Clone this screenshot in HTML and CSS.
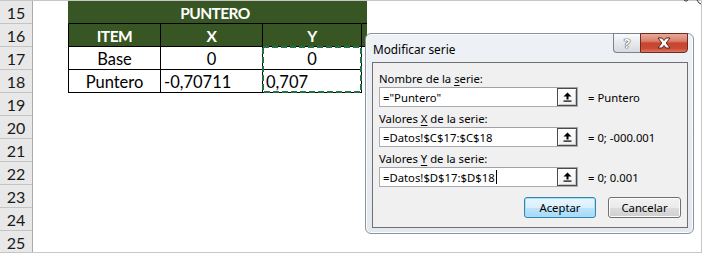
FILE: index.html
```html
<!DOCTYPE html>
<html lang="es">
<head>
<meta charset="utf-8">
<title>Modificar serie</title>
<link rel="stylesheet" href="styles.css">
</head>
<body>
<div class="sheet">
  <div class="rowheads">
    <div class="rh">15</div>
    <div class="rh">16</div>
    <div class="rh">17</div>
    <div class="rh">18</div>
    <div class="rh">19</div>
    <div class="rh">20</div>
    <div class="rh">21</div>
    <div class="rh">22</div>
    <div class="rh">23</div>
    <div class="rh">24</div>
    <div class="rh">25</div>
  </div>
  <div class="cells">
    <div class="grid">
      <div class="c title">PUNTERO</div>
      <div class="c fill"></div>
      <div class="c hd first">ITEM</div>
      <div class="c hd">X</div>
      <div class="c hd">Y</div>
      <div class="c fill"></div>
      <div class="c first">Base</div>
      <div class="c">0</div>
      <div class="c">0</div>
      <div class="c blank"></div>
      <div class="c first">Puntero</div>
      <div class="c left">-0,70711</div>
      <div class="c left">0,707</div>
      <div class="c blank"></div>
    </div>
    <svg class="marquee" width="100" height="47" viewBox="0 0 100 47">
      <rect x="1" y="1" width="98" height="45" fill="none" stroke="#217346" stroke-width="2" stroke-dasharray="6 3"/>
    </svg>
  </div>
</div>

<svg class="marks" width="20" height="6" viewBox="0 0 20 6">
  <path d="M1 0 Q3 2.5 5 0" fill="none" stroke="#333" stroke-width="1"/>
  <path d="M14 0 Q16 4 18 4" fill="none" stroke="#333" stroke-width="1"/>
</svg>

<div class="dialog">
  <div class="titlebar">
    <span class="title-text">Modificar serie</span>
    <div class="caps">
      <div class="cap help">?</div>
      <div class="cap close">
        <svg width="16" height="12" viewBox="0 0 16 12">
          <path d="M2 1 H6 L8 3.5 L10 1 H14 L10.2 6 L14 11 H10 L8 8.5 L6 11 H2 L5.8 6 Z" fill="#fff" stroke="#5b2317" stroke-width="1"/>
        </svg>
      </div>
    </div>
  </div>
  <div class="panel">
    <div class="label">Nombre de la <u>s</u>erie:</div>
    <div class="field">
      <div class="input"><span class="val">="Puntero"</span><span class="pick"><svg width="9" height="10" viewBox="0 0 9 10"><path d="M4.5 0.5 L8.5 4.5 H5.5 V7.5 H3.5 V4.5 H0.5 Z" fill="#000"/><rect x="0.5" y="8.5" width="8" height="1.2" fill="#000"/></svg></span></div>
      <span class="result">= Puntero</span>
    </div>
    <div class="label">Valores <u>X</u> de la serie:</div>
    <div class="field">
      <div class="input"><span class="val">=Datos!$C$17:$C$18</span><span class="pick"><svg width="9" height="10" viewBox="0 0 9 10"><path d="M4.5 0.5 L8.5 4.5 H5.5 V7.5 H3.5 V4.5 H0.5 Z" fill="#000"/><rect x="0.5" y="8.5" width="8" height="1.2" fill="#000"/></svg></span></div>
      <span class="result">= 0; -000.001</span>
    </div>
    <div class="label">Valores <u>Y</u> de la serie:</div>
    <div class="field">
      <div class="input"><span class="val">=Datos!$D$17:$D$18</span><span class="caret"></span><span class="pick"><svg width="9" height="10" viewBox="0 0 9 10"><path d="M4.5 0.5 L8.5 4.5 H5.5 V7.5 H3.5 V4.5 H0.5 Z" fill="#000"/><rect x="0.5" y="8.5" width="8" height="1.2" fill="#000"/></svg></span></div>
      <span class="result">= 0; 0.001</span>
    </div>
    <div class="actions">
      <button class="btn default">Aceptar</button>
      <button class="btn">Cancelar</button>
    </div>
  </div>
</div>
</body>
</html>
```
FILE: styles.css
```css
html, body {
  margin: 0;
  padding: 0;
}
body {
  width: 702px;
  height: 253px;
  overflow: hidden;
  position: relative;
  background: #fff;
}
.sheet {
  display: flex;
  height: 253px;
  box-sizing: border-box;
  border-top: 1px solid #c6c6c6;
  border-bottom: 1px solid #c6c6c6;
  border-right: 1px solid #c6c6c6;
  overflow: hidden;
}
.rowheads {
  width: 33px;
  flex: none;
  box-sizing: border-box;
  background: #e8e8e8;
  border-right: 1px solid #ababab;
}
.rh {
  height: 23px;
  box-sizing: border-box;
  border-bottom: 1px solid #c4c4c4;
  display: flex;
  align-items: center;
  justify-content: center;
  font-family: Lato, "Liberation Sans", sans-serif;
  font-size: 16px;
  color: #1a1a1a;
}
.cells {
  flex: 1;
  position: relative;
  padding-left: 35px;
}
.grid {
  display: grid;
  grid-template-columns: 93px 102px 99px 5px;
  grid-auto-rows: 23px;
}
.c {
  box-sizing: border-box;
  border-right: 1px solid #000;
  border-bottom: 1px solid #000;
  display: flex;
  align-items: center;
  justify-content: center;
  font-family: Lato, "Liberation Sans", sans-serif;
  font-size: 16.5px;
  color: #000;
  padding-top: 1px;
}
.c.first {
  border-left: 1px solid #000;
}
.c.left {
  justify-content: flex-start;
  padding-left: 3px;
}
.c.title {
  grid-column: 1 / 4;
  background: #375623;
  color: #fff;
  font-weight: bold;
  font-size: 15.5px;
  letter-spacing: -0.6px;
  border-left: 1px solid #375623;
  border-right: 1px solid #375623;
}
.c.hd {
  background: #375623;
  color: #fff;
  font-weight: bold;
  font-size: 15.5px;
  letter-spacing: -0.5px;
}
.c.fill {
  background: #375623;
  border-right: none;
}
.c.blank {
  border: none;
}
.marquee {
  position: absolute;
  left: 229px;
  top: 45px;
}
.marks {
  position: absolute;
  left: 683px;
  top: 0;
}

/* dialog */
.dialog {
  position: absolute;
  left: 365px;
  top: 33px;
  width: 329px;
  height: 201px;
  box-sizing: border-box;
  border: 1px solid #8a939e;
  border-radius: 6px;
  background: linear-gradient(#eef1f5, #e4e9ef);
  box-shadow: inset 0 0 0 1px #fbfcfd;
  display: flex;
  flex-direction: column;
  font-family: "Noto Sans", "Open Sans", sans-serif;
  font-size: 11.3px;
  color: #000;
}
.titlebar {
  height: 28px;
  flex: none;
  position: relative;
  display: flex;
  align-items: center;
  padding-left: 7px;
}
.title-text {
  font-size: 11.8px;
  color: #000;
  margin-top: 2px;
}
.caps {
  position: absolute;
  top: -1px;
  right: 5px;
  display: flex;
}
.cap {
  height: 20px;
  box-sizing: border-box;
  display: flex;
  align-items: center;
  justify-content: center;
}
.help {
  width: 27px;
  border: 1px solid #7c828a;
  border-right: none;
  border-radius: 0 0 0 4px;
  background: linear-gradient(#fafbfc, #e6e9ed 50%, #d7dbe0);
  color: #fff;
  font-weight: bold;
  font-size: 13px;
  text-shadow: 0 0 1px #3c4147, 0 0 1px #3c4147, 0 0 1px #3c4147;
}
.close {
  width: 48px;
  border: 1px solid #6d2b20;
  border-radius: 0 0 4px 0;
  background: linear-gradient(#e8a898, #d9806c 40%, #c7452f 50%, #c94a35 80%, #dc7a5f);
}
.panel {
  flex: 1;
  margin: 0 5px 5px 6px;
  border: 1px solid #6f6f6f;
  background: #f0f0f0;
  padding: 7px 6px 0 6px;
}
.label {
  height: 17px;
  line-height: 17px;
  white-space: nowrap;
}
.label u {
  text-decoration-thickness: 1px;
  text-underline-offset: 2px;
}
.field {
  display: flex;
  align-items: center;
  height: 20px;
  margin-bottom: 3px;
}
.input {
  width: 199px;
  height: 20px;
  box-sizing: border-box;
  border: 1px solid #abadb3;
  border-top-color: #9ea1a8;
  background: #fff;
  display: flex;
  align-items: center;
  padding-left: 3px;
}
.val {
  white-space: nowrap;
}
.caret {
  width: 1px;
  height: 14px;
  background: #000;
  margin-left: 1px;
}
.pick {
  margin-left: auto;
  width: 20px;
  height: 18px;
  box-sizing: border-box;
  border: 1px solid #4a4a4a;
  background: linear-gradient(#ffffff, #f1f1f1);
  box-shadow: inset 1px 1px 0 #fff, inset -1px -1px 0 #c8c8c8;
  display: flex;
  align-items: center;
  justify-content: center;
}
.result {
  margin-left: 10px;
  white-space: nowrap;
}
.actions {
  display: flex;
  justify-content: flex-end;
  gap: 12px;
  margin-top: 10px;
}
.btn {
  width: 73px;
  height: 21px;
  box-sizing: border-box;
  border: 1px solid #707070;
  border-radius: 3px;
  background: linear-gradient(#f2f2f2, #ebebeb 50%, #dddddd 50%, #cfcfcf);
  box-shadow: inset 0 0 0 1px #fcfcfc;
  font-family: "Noto Sans", "Open Sans", sans-serif;
  font-size: 11.3px;
  color: #000;
  padding: 0;
}
.btn.default {
  width: 72px;
  border-color: #3c7fb1;
  box-shadow: inset 0 0 0 1px #9ee3fb;
  background: linear-gradient(#eaf6fd, #d9f0fc 50%, #bee6fd 50%, #a7d9f5);
}
```
